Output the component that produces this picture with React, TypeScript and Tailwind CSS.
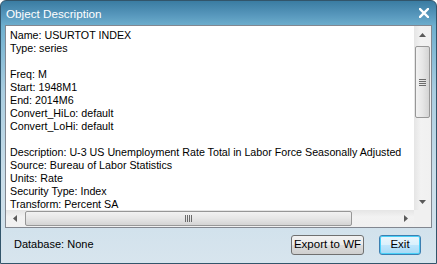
const lines = [
  "Name: USURTOT INDEX",
  "Type: series",
  "",
  "Freq: M",
  "Start: 1948M1",
  "End: 2014M6",
  "Convert_HiLo: default",
  "Convert_LoHi: default",
  "",
  "Description: U-3 US Unemployment Rate Total in Labor Force Seasonally Adjusted",
  "Source: Bureau of Labor Statistics",
  "Units: Rate",
  "Security Type: Index",
  "Transform: Percent SA",
]

const Arrow = ({ dir }: { dir: "up" | "down" | "left" | "right" }) => {
  const pts = {
    up: "0,4 3.5,0 7,4",
    down: "0,0 3.5,4 7,0",
    left: "4,0 0,3.5 4,7",
    right: "0,0 4,3.5 0,7",
  }[dir]
  const vertical = dir === "up" || dir === "down"
  return (
    <svg width={vertical ? 7 : 4} height={vertical ? 4 : 7} viewBox={vertical ? "0 0 7 4" : "0 0 4 7"}>
      <polygon points={pts} fill="#5a5a5a" />
    </svg>
  )
}

const App = () => {
  return (
    <div className="w-[437px] h-[264px] bg-white">
      <div
        className="w-[437px] h-[264px] flex flex-col rounded-t-[6px] border border-[#32556b] bg-[linear-gradient(to_bottom,#3a7ca2_0px,#5797bc_14px,#6eafce_25px,#a9cde0_90px,#c8dde9_170px,#d8e5ee_264px)]"
        style={{ fontFamily: "'Liberation Sans', Arial, sans-serif" }}
      >
        {/* title bar */}
        <div className="h-[24px] flex items-center justify-between pl-[5px] pr-[7px]">
          <span className="text-white text-[11.7px] leading-none pt-[1px]">Object Description</span>
          <svg width="10" height="10" viewBox="0 0 10 10" className="mb-[1px]">
            <path d="M1 1 L9 9 M9 1 L1 9" stroke="white" strokeWidth="2.4" strokeLinecap="square" />
          </svg>
        </div>

        <div className="flex-1 flex flex-col px-[4px]">
          {/* text box */}
          <div className="h-[203px] border border-[#828790] bg-white flex flex-col">
            <div className="flex flex-1 min-h-0">
              <div className="flex-1 pl-[4px] pt-[3px] text-[10.7px] leading-[13px] text-black whitespace-nowrap overflow-hidden">
                {lines.map((l, i) => (
                  <div key={i} className="h-[13px]">{l}</div>
                ))}
              </div>
              {/* vertical scrollbar */}
              <div className="w-[17px] flex flex-col bg-[linear-gradient(to_right,#e5e5e5,#f2f2f2_40%,#f0f0f0)]">
                <div className="h-[17px] flex items-center justify-center">
                  <Arrow dir="up" />
                </div>
                <div className="flex-1 pt-[3px] pl-[1px] pr-[1px]">
                  <div className="h-[72px] rounded-[2px] border border-[#979797] bg-[linear-gradient(to_right,#f2f2f2,#e6e6e6_50%,#d4d4d4)] flex items-center justify-center">
                    <div className="flex flex-col gap-[1px]">
                      <div className="w-[7px] h-[1px] bg-[#6b6b6b]" />
                      <div className="w-[7px] h-[1px] bg-[#6b6b6b]" />
                      <div className="w-[7px] h-[1px] bg-[#6b6b6b]" />
                      <div className="w-[7px] h-[1px] bg-[#6b6b6b]" />
                    </div>
                  </div>
                </div>
                <div className="h-[17px] flex items-center justify-center">
                  <Arrow dir="down" />
                </div>
              </div>
            </div>
            {/* horizontal scrollbar */}
            <div className="h-[17px] flex">
              <div className="flex-1 flex bg-[linear-gradient(to_bottom,#e5e5e5,#f2f2f2_40%,#f0f0f0)]">
                <div className="w-[17px] flex items-center justify-center">
                  <Arrow dir="left" />
                </div>
                <div className="flex-1 pl-[2px] pr-[45px] py-[1px]">
                  <div className="h-full rounded-[2px] border border-[#979797] bg-[linear-gradient(to_bottom,#f2f2f2,#e6e6e6_50%,#d4d4d4)] flex items-center justify-center">
                    <div className="flex gap-[1px]">
                      <div className="w-[1px] h-[7px] bg-[#6b6b6b]" />
                      <div className="w-[1px] h-[7px] bg-[#6b6b6b]" />
                      <div className="w-[1px] h-[7px] bg-[#6b6b6b]" />
                      <div className="w-[1px] h-[7px] bg-[#6b6b6b]" />
                    </div>
                  </div>
                </div>
                <div className="w-[17px] flex items-center justify-center">
                  <Arrow dir="right" />
                </div>
              </div>
              <div className="w-[17px] bg-[#f0f0f0]" />
            </div>
          </div>

          {/* footer */}
          <div className="flex-1 flex items-center justify-between pl-[9px] pr-[11px] pb-[2px]">
            <span className="text-[11px] text-black">Database: None</span>
            <div className="flex items-center gap-[15px]">
              <button className="w-[73px] h-[20px] rounded-[3px] border border-[#707070] bg-[linear-gradient(to_bottom,#f2f2f2,#ebebeb_50%,#dddddd_50%,#cfcfcf)] text-[11.5px] leading-none text-black">
                Export to WF
              </button>
              <button className="w-[42px] h-[20px] rounded-[3px] border border-[#3c7fb1] bg-[linear-gradient(to_bottom,#eaf6fd,#d9f0fc_50%,#bee6fd_50%,#a7d9f5)] shadow-[inset_0_0_0_1px_#48d0f8] text-[11.5px] leading-none text-black">
                Exit
              </button>
            </div>
          </div>
        </div>
      </div>
    </div>
  )
}

export default App
